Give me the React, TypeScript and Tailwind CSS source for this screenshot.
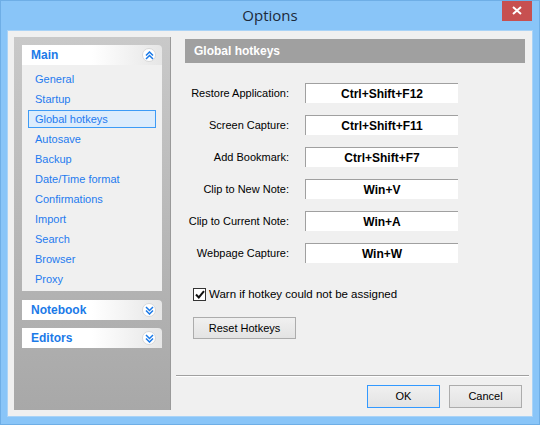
const items = [
  'General',
  'Startup',
  'Global hotkeys',
  'Autosave',
  'Backup',
  'Date/Time format',
  'Confirmations',
  'Import',
  'Search',
  'Browser',
  'Proxy',
]

const hotkeys = [
  ['Restore Application:', 'Ctrl+Shift+F12'],
  ['Screen Capture:', 'Ctrl+Shift+F11'],
  ['Add Bookmark:', 'Ctrl+Shift+F7'],
  ['Clip to New Note:', 'Win+V'],
  ['Clip to Current Note:', 'Win+A'],
  ['Webpage Capture:', 'Win+W'],
]

function Chevrons({ up }: { up?: boolean }) {
  return (
    <div className="w-[14px] h-[14px] rounded-full bg-white border border-[#d8d8d8] flex items-center justify-center">
      <svg width="9" height="9" viewBox="0 0 9 9" className={up ? '' : 'rotate-180'}>
        <path d="M1 4.5 L4.5 1 L8 4.5 M1 8 L4.5 4.5 L8 8" fill="none" stroke="#1b7ae8" strokeWidth="1.5" />
      </svg>
    </div>
  )
}

function GroupHeader({ title, up }: { title: string; up?: boolean }) {
  return (
    <div className="h-[20px] flex items-center justify-between pl-[9px] pr-[6px] rounded-tr-[4px] bg-gradient-to-r from-white from-50% to-[#e6e6e6]">
      <span className="text-[12px] font-bold text-[#1b7ae8]">{title}</span>
      <Chevrons up={up} />
    </div>
  )
}

function App() {
  return (
    <div
      className="w-[540px] h-[425px] bg-[#89c5f8] border border-[#6eaee6] flex flex-col overflow-hidden"
      style={{ fontFamily: '"Liberation Sans", Arial, sans-serif' }}
    >
      <div className="h-[29px] flex items-start relative">
        <div className="flex-1 h-[29px] flex items-center justify-center text-[15px] text-[#1c2a3a]" style={{ fontFamily: '"Open Sans", "Noto Sans", sans-serif' }}>
          Options
        </div>
        <div className="absolute right-[7px] top-[-1px] w-[30px] h-[21px] bg-[#c75050] flex items-center justify-center">
          <svg width="10" height="9" viewBox="0 0 10 9">
            <path d="M1 1 L9 8 M9 1 L1 8" stroke="white" strokeWidth="2" />
          </svg>
        </div>
      </div>

      <div className="mx-[6px] mb-[7px] flex-1 bg-[#f0f0f0] border border-[#a9d3f7] flex">
        <div className="w-[157px] ml-[6px] mt-[6px] mb-[6px] bg-gradient-to-b from-[#c9c9c9] to-[#a8a8a8] border-r border-[#9a9a9a] px-[8px] pt-[8px] flex flex-col">
          <GroupHeader title="Main" up />
          <div className="bg-[#f0f0f0] pt-[4px] pb-[2px]">
            {items.map((it) => (
              <div key={it} className="h-[20px] py-[1px] px-[6px]">
                <div
                  className={
                    'h-[18px] flex items-center text-[11px] text-[#1f7bef] ' +
                    (it === 'Global hotkeys' ? 'bg-[#dcecfc] border border-[#3d9bf6] pl-[6px]' : 'pl-[7px]')
                  }
                >
                  {it}
                </div>
              </div>
            ))}
          </div>
          <div className="mt-[9px]">
            <GroupHeader title="Notebook" />
          </div>
          <div className="mt-[8px]">
            <GroupHeader title="Editors" />
          </div>
        </div>

        <div className="flex-1 flex flex-col">
          <div className="ml-[14px] mr-[7px] mt-[8px] h-[24px] bg-[#a0a0a0] flex items-center pl-[9px]">
            <span className="text-[12px] font-bold text-white">Global hotkeys</span>
          </div>

          <div className="ml-[14px] mt-[20px] flex flex-col gap-[12px]">
            {hotkeys.map(([label, value]) => (
              <div key={label} className="flex items-center h-[20px]">
                <div className="w-[104px] text-right text-[11px] text-black">{label}</div>
                <div className="ml-[16px] w-[153px] h-[20px] bg-white border-t border-l border-[#a0a0a0] flex items-center justify-center text-[12px] font-bold text-black">
                  {value}
                </div>
              </div>
            ))}
          </div>

          <div className="ml-[22px] mt-[23px] flex items-center gap-[3px]">
            <div className="w-[13px] h-[13px] bg-white border border-[#333] flex items-center justify-center">
              <svg width="10" height="9" viewBox="0 0 10 9">
                <path d="M1 4.5 L3.8 7.5 L9 1.2" fill="none" stroke="#111" strokeWidth="2" />
              </svg>
            </div>
            <span className="text-[11.5px] text-black">Warn if hotkey could not be assigned</span>
          </div>

          <div className="ml-[22px] mt-[14px] w-[103px] h-[22px] bg-gradient-to-b from-[#f0f0f0] to-[#e3e3e3] border border-[#acacac] flex items-center justify-center text-[11px] text-black">
            Reset Hotkeys
          </div>

          <div className="flex-1" />

          <div className="ml-[5px] mr-[3px] border-t border-[#a0a0a0] border-b border-b-white" />

          <div className="flex justify-end gap-[9px] mr-[10px] mt-[8px] mb-[8px]">
            <div className="w-[73px] h-[23px] bg-gradient-to-b from-[#f0f0f0] to-[#e3e3e3] border border-[#3399ff] flex items-center justify-center text-[11px] text-black">
              OK
            </div>
            <div className="w-[73px] h-[23px] bg-gradient-to-b from-[#f0f0f0] to-[#e3e3e3] border border-[#acacac] flex items-center justify-center text-[11px] text-black">
              Cancel
            </div>
          </div>
        </div>
      </div>
    </div>
  )
}

export default App
